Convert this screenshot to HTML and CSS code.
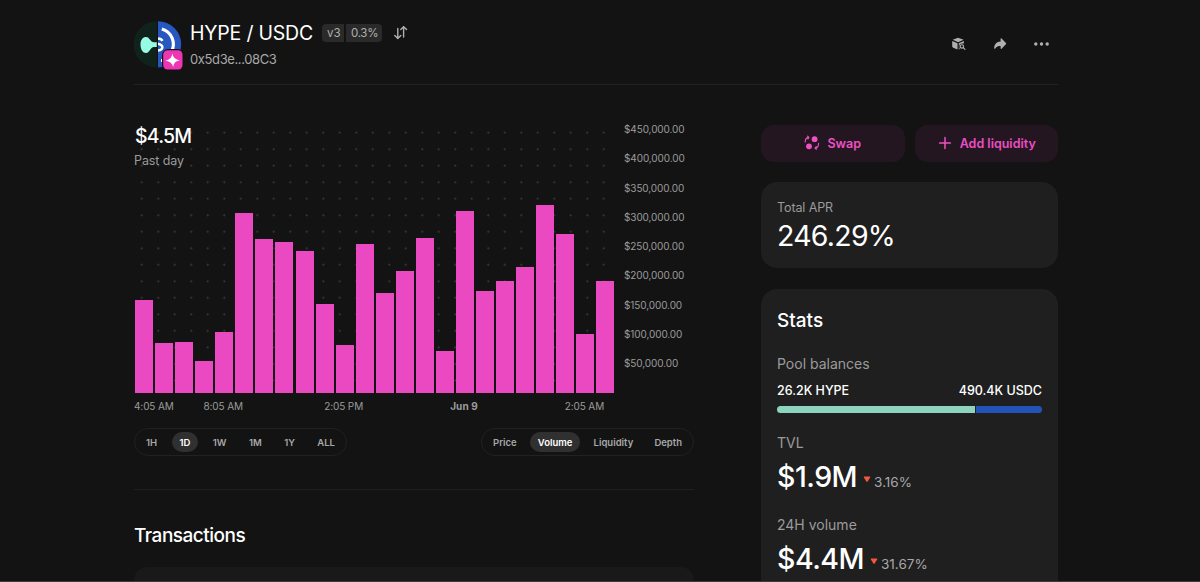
FILE: index.html
```html
<!DOCTYPE html>
<html lang="en">
<head>
  <meta charset="UTF-8">
  <meta name="viewport" content="width=device-width, initial-scale=1.0">
  <title>HYPE / USDC</title>
  <link rel="stylesheet" href="styles.css">
</head>
<body>
  <div class="page">

    <!-- Pool Header -->
    <header class="pool-header">
      <svg class="pool-logo" width="50" height="50" viewBox="0 0 50 50">
        <defs>
          <clipPath id="left-half"><path d="M22.8 0.2A23.2 23.2 0 0 0 22.8 46.6Z"/></clipPath>
          <clipPath id="right-half"><path d="M24 0.2A23.2 23.2 0 0 1 24 46.6Z"/></clipPath>
        </defs>
        <g clip-path="url(#left-half)">
          <rect width="24" height="48" fill="#0f231c"/>
          <path d="M6.5 23.5C6.5 18.5 9 16 12 16C16 16 16 21.3 20 21.3H24V26H20C16 26 16 32 12 32C9 32 6.5 28.5 6.5 23.5Z" fill="#97fce4"/>
        </g>
        <g clip-path="url(#right-half)">
          <rect x="23" width="27" height="48" fill="#2757c0"/>
          <path d="M27.8 8A15.8 15.8 0 0 1 37.3 31" fill="none" stroke="#fff" stroke-width="3.2"/>
          <path d="M28.5 19.8C27.5 18 25.5 17.5 23 17.5M23 22.6C26 23.1 28.4 24 28.4 26.3C28.4 28.6 26.5 29.5 23 29.5" fill="none" stroke="#fff" stroke-width="2.4"/>
          <path d="M27 38h3v3h-3z" fill="#fff"/>
        </g>
        <rect x="28" y="28" width="22" height="22" rx="6" fill="#131313"/>
        <rect x="29.2" y="29.2" width="19.3" height="19.3" rx="4.5" fill="#ee35b4"/>
        <path d="M38.4 32.4Q38.8 37.8 46 39.6Q39.8 40 39.2 46Q38.2 40.8 31.5 39.4Q37.6 38.6 38.4 32.4Z" fill="#fff"/>
      </svg>
      <div class="pool-info">
        <div class="pool-title-row">
          <h1 class="pool-title">HYPE / USDC</h1>
          <div class="badges">
            <span class="badge badge-left">v3</span>
            <span class="badge badge-right">0.3%</span>
          </div>
          <svg class="swap-arrows" width="16" height="16" viewBox="0 0 16 16" fill="none" stroke="#b0b0b0" stroke-width="1.4" stroke-linecap="round" stroke-linejoin="round">
            <path d="M4.8 3.4V13.4M1.8 10.4L4.8 13.4L7.8 10.4M10.6 12V1.8M7.8 4.6L10.6 1.8L13.6 4.6"/>
          </svg>
        </div>
        <div class="pool-address">0x5d3e...08C3</div>
      </div>
      <div class="header-actions">
        <svg width="16" height="16" viewBox="0 0 16 16">
          <path d="M7 1.8L12.6 3.8L7.2 6.2L1.7 3.8Z" fill="#b0b0b0"/>
          <path d="M1.2 4.9L6.5 7.2V13.4L2.2 11.7Q1.2 11.3 1.2 10.3Z" fill="#b0b0b0"/>
          <path d="M7.8 7.2L12.9 4.9V7.6Q8.3 7 8.1 10.6Q8.1 12 8.9 12.9L7.8 13.4Z" fill="#b0b0b0"/>
          <circle cx="10.9" cy="10.4" r="1.7" fill="none" stroke="#b0b0b0" stroke-width="1.1"/>
          <path d="M12.2 11.7L14 13.4" stroke="#b0b0b0" stroke-width="1.1" stroke-linecap="round"/>
        </svg>
        <svg width="16" height="16" viewBox="0 0 16 16">
          <path d="M8.6 2.7V5.4C4.5 5.6 2.2 8.3 2.2 12.2C2.2 13 2.9 13 3.3 12.4C4.5 10.4 6.2 9.9 8.6 9.9V12.3C8.6 12.9 9.2 13.1 9.6 12.7L13.9 8.2C14.3 7.8 14.3 7.3 13.9 6.9L9.6 2.4C9.2 2 8.6 2.1 8.6 2.7Z" fill="#b0b0b0"/>
        </svg>
        <svg width="18" height="16" viewBox="0 0 18 16" fill="#b0b0b0">
          <circle cx="2.8" cy="8" r="1.7"/>
          <circle cx="8.5" cy="8" r="1.7"/>
          <circle cx="14.2" cy="8" r="1.7"/>
        </svg>
      </div>
    </header>

    <div class="content">

      <!-- Left Column -->
      <main class="left-column">
        <div class="chart">
          <div class="plot">
            <div class="chart-heading">
              <div class="chart-value">$4.5M</div>
              <div class="chart-period">Past day</div>
            </div>
            <div class="bars" id="bars"></div>
          </div>
          <div class="y-axis">
            <span>$450,000.00</span>
            <span>$400,000.00</span>
            <span>$350,000.00</span>
            <span>$300,000.00</span>
            <span>$250,000.00</span>
            <span>$200,000.00</span>
            <span>$150,000.00</span>
            <span>$100,000.00</span>
            <span>$50,000.00</span>
          </div>
          <div class="x-axis">
            <span class="tick-1">4:05 AM</span>
            <span class="tick-4">8:05 AM</span>
            <span class="tick-10">2:05 PM</span>
            <span class="tick-16 tick-bold">Jun 9</span>
            <span class="tick-22">2:05 AM</span>
          </div>
        </div>

        <div class="chart-controls">
          <div class="segmented ranges">
            <span class="segment">1H</span>
            <span class="segment active">1D</span>
            <span class="segment">1W</span>
            <span class="segment">1M</span>
            <span class="segment">1Y</span>
            <span class="segment">ALL</span>
          </div>
          <div class="segmented types">
            <span class="segment">Price</span>
            <span class="segment active">Volume</span>
            <span class="segment">Liquidity</span>
            <span class="segment">Depth</span>
          </div>
        </div>

        <h2 class="section-title">Transactions</h2>
        <div class="table-header"></div>
      </main>

      <!-- Right Column -->
      <aside class="right-column">
        <div class="actions">
          <button class="action-btn">
            <svg width="16" height="16" viewBox="0 0 16 16">
              <circle cx="10.6" cy="4.2" r="2.9" fill="#f050c4"/>
              <circle cx="5" cy="11.3" r="2.9" fill="#f050c4"/>
              <path d="M1.2 7C1.2 4.2 2.4 2.7 4.6 2.4M3.5 1.2L4.9 2.4L3.9 3.9M14.6 8.2C14.6 11.2 13.3 12.9 11.2 13.2M12.3 11.7L11 13.2L12.5 14.2" fill="none" stroke="#f050c4" stroke-width="1.1" stroke-linecap="round" stroke-linejoin="round"/>
            </svg>
            <span>Swap</span>
          </button>
          <button class="action-btn">
            <svg width="16" height="16" viewBox="0 0 16 16">
              <path d="M8 2.6V13.4M2.6 8H13.4" stroke="#f050c4" stroke-width="1.5" stroke-linecap="round"/>
            </svg>
            <span>Add liquidity</span>
          </button>
        </div>

        <div class="card apr-card">
          <div class="apr-label">Total APR</div>
          <div class="apr-value">246.29%</div>
        </div>

        <div class="card stats-card">
          <h2 class="stats-title">Stats</h2>
          <div class="stat-label">Pool balances</div>
          <div class="balances">
            <span>26.2K HYPE</span>
            <span>490.4K USDC</span>
          </div>
          <div class="balance-bar">
            <div class="balance-hype" style="width: 74.8%"></div>
            <div class="balance-usdc"></div>
          </div>
          <div class="stat">
            <div class="stat-label">TVL</div>
            <div class="stat-row">
              <span class="stat-value">$1.9M</span>
              <svg class="down" width="8" height="7" viewBox="0 0 8 7"><path d="M1.3 0.5H6.7Q7.6 0.5 7.1 1.4L4.6 5.6Q4 6.4 3.4 5.6L0.9 1.4Q0.4 0.5 1.3 0.5Z" fill="#f0593c"/></svg>
              <span class="stat-delta">3.16%</span>
            </div>
          </div>
          <div class="stat">
            <div class="stat-label">24H volume</div>
            <div class="stat-row">
              <span class="stat-value">$4.4M</span>
              <svg class="down" width="8" height="7" viewBox="0 0 8 7"><path d="M1.3 0.5H6.7Q7.6 0.5 7.1 1.4L4.6 5.6Q4 6.4 3.4 5.6L0.9 1.4Q0.4 0.5 1.3 0.5Z" fill="#f0593c"/></svg>
              <span class="stat-delta">31.67%</span>
            </div>
          </div>
        </div>
      </aside>

    </div>
  </div>

  <script>
    // Hourly volume in thousands of dollars
    const volumes = [158, 85, 86, 53, 104, 306.5, 263, 256.5, 241.5, 151, 81, 253, 170, 208.5, 264, 71, 310, 174, 190.5, 214, 320.5, 271.5, 99.5, 190.5];
    const pxPerThousand = 0.585;
    const bars = document.getElementById('bars');

    volumes.forEach(volume => {
      const bar = document.createElement('div');
      bar.className = 'bar';
      bar.style.height = `${Math.ceil(volume * pxPerThousand)}px`;
      bars.appendChild(bar);
    });
  </script>

</body>
</html>
```
FILE: styles.css
```css
/* Basic Reset */
* {
  margin: 0;
  padding: 0;
  box-sizing: border-box;
}

body {
  background-color: #131313;
  color: #fff;
  font-family: 'Inter', 'Liberation Sans', sans-serif;
  overflow: hidden;
}

h1, h2 {
  font-weight: 450;
}

svg {
  display: block;
  flex-shrink: 0;
}

.page {
  height: 582px;
  padding: 0 142px 0 134px;
  border-bottom: 1px solid #3c3c3c;
  overflow: hidden;
}

/* Pool Header */
.pool-header {
  display: flex;
  height: 85px;
  padding-top: 21px;
  border-bottom: 1px solid #222;
}

.pool-info {
  margin-left: 6px;
}

.pool-title-row {
  display: flex;
  align-items: center;
  height: 23px;
}

.pool-title {
  width: 132px;
  font-size: 19.5px;
  font-weight: 400;
  letter-spacing: -0.2px;
  white-space: nowrap;
}

.badges {
  display: flex;
  gap: 2px;
}

.badge {
  height: 18px;
  padding: 0 5px;
  line-height: 18px;
  font-size: 11.5px;
  color: #b0b0b0;
  background-color: #2a2a2a;
}

.badge-left {
  width: 22px;
  border-radius: 4px 0 0 4px;
}

.badge-right {
  width: 36px;
  border-radius: 0 4px 4px 0;
  letter-spacing: -0.3px;
}

.swap-arrows {
  margin-left: 11px;
}

.pool-address {
  margin-top: 7px;
  line-height: 16px;
  font-size: 13px;
  letter-spacing: -0.38px;
  color: #a8a8a8;
}

.header-actions {
  display: flex;
  gap: 25px;
  margin: 15px 7px 0 auto;
}

/* Columns */
.content {
  display: flex;
  justify-content: space-between;
}

.left-column {
  width: 560px;
}

.right-column {
  width: 297px;
  padding-top: 40px;
}

/* Chart */
.chart {
  display: grid;
  grid-template-columns: 481px 79px;
  grid-template-rows: 273px 26px;
  padding-top: 35px;
}

.plot {
  display: flex;
  flex-direction: column;
  justify-content: space-between;
  height: 273px;
  padding-left: 1px;
  background-image: radial-gradient(circle, #3c3c3c 0.7px, transparent 1.3px);
  background-size: 16.5px 16.53px;
  background-position: -0.5px 4.4px;
}

.chart-heading {
  height: 50px;
  padding-top: 4px;
}

.chart-value {
  line-height: 25px;
  font-size: 19.5px;
  font-weight: 500;
  letter-spacing: -0.8px;
}

.chart-period {
  margin: 4px 0 0 -1px;
  line-height: 16px;
  font-size: 12.5px;
  letter-spacing: -0.1px;
  color: #9b9b9b;
}

.bars {
  display: flex;
  align-items: flex-end;
  gap: 2.07px;
}

.bar {
  width: 18px;
  background-color: #eb49c1;
}

.y-axis {
  display: flex;
  flex-direction: column;
  padding: 1px 0 0 9px;
  font-size: 10px;
  letter-spacing: -0.1px;
  color: #9b9b9b;
}

.y-axis span {
  height: 29.25px;
  line-height: 16px;
}

.x-axis {
  display: grid;
  grid-template-columns: repeat(24, 20.07px);
  padding-top: 5px;
  line-height: 16px;
  font-size: 10px;
  letter-spacing: -0.1px;
  color: #9b9b9b;
}

.x-axis span {
  display: flex;
  justify-content: center;
  grid-row: 1;
  width: 18px;
  white-space: nowrap;
}

.x-axis .tick-1 {
  grid-column: 1;
  justify-content: flex-start;
}

.tick-4 { grid-column: 5; }
.tick-10 { grid-column: 11; }
.tick-16 { grid-column: 17; }
.tick-22 { grid-column: 23; }

.x-axis .tick-bold {
  font-weight: 700;
  letter-spacing: 0.1px;
}

/* Chart Controls */
.chart-controls {
  display: flex;
  justify-content: space-between;
  padding: 9px 0 33px;
  border-bottom: 1px solid #1f1f1f;
}

.segmented {
  display: flex;
  justify-content: space-between;
  height: 28px;
  padding: 3px;
  border: 1px solid #212121;
  border-radius: 14px;
}

.ranges {
  width: 213px;
}

.types {
  width: 213px;
}

.segment {
  height: 20px;
  padding: 0 8px;
  border-radius: 10px;
  line-height: 21px;
  font-size: 9.5px;
  font-weight: 600;
  color: #a8a8a8;
}

.segment.active {
  color: #fff;
  background-color: #303030;
}

/* Transactions */
.section-title {
  margin-top: 33px;
  line-height: 26px;
  font-size: 19px;
  letter-spacing: -0.5px;
}

.table-header {
  height: 40px;
  margin-top: 18px;
  border-radius: 13px 13px 0 0;
  background-color: #191919;
}

/* Actions */
.actions {
  display: flex;
  gap: 10px;
}

.action-btn {
  display: flex;
  flex: 1;
  justify-content: center;
  align-items: center;
  gap: 7px;
  height: 37px;
  padding-bottom: 1px;
  border: none;
  border-radius: 13px;
  background-color: #241620;
  color: #ec4fc4;
  font-family: inherit;
  font-size: 12.5px;
  font-weight: 600;
}

/* Cards */
.card {
  padding: 0 16px;
  border-radius: 16px;
  background-color: #1f1f1f;
}

.apr-card {
  height: 86px;
  margin-top: 20px;
  padding-top: 18px;
}

.apr-label {
  line-height: 16px;
  font-size: 12.5px;
  letter-spacing: -0.1px;
  color: #9b9b9b;
}

.apr-value {
  margin-top: 2px;
  line-height: 36px;
  font-size: 28.5px;
  font-weight: 400;
  letter-spacing: -0.75px;
}

.stats-card {
  height: 400px;
  margin-top: 21px;
  padding-top: 19px;
}

.stats-title {
  margin-bottom: 20px;
  line-height: 26px;
  font-size: 19px;
}

.stat-label {
  line-height: 20px;
  font-size: 14px;
  color: #9b9b9b;
}

.balances {
  display: flex;
  justify-content: space-between;
  margin: 9px 0 7px;
  line-height: 16px;
  font-size: 12.5px;
  font-weight: 450;
}

.balance-bar {
  display: flex;
  gap: 1px;
  height: 7px;
  margin-bottom: 20px;
}

.balance-hype {
  border-radius: 3.5px 0 0 3.5px;
  background-color: #8dd3bd;
}

.balance-usdc {
  flex: 1;
  border-radius: 0 3.5px 3.5px 0;
  background-color: #2453b8;
}

.stat {
  height: 82px;
}

.stat-row {
  display: flex;
  align-items: baseline;
  margin-top: 6px;
  line-height: 36px;
}

.stat-value {
  font-size: 28.5px;
  font-weight: 450;
  letter-spacing: -0.5px;
}

.down {
  align-self: center;
  margin: 0 3px 0 6px;
}

.stat-delta {
  font-size: 13.5px;
  color: #a8a8a8;
}
```
